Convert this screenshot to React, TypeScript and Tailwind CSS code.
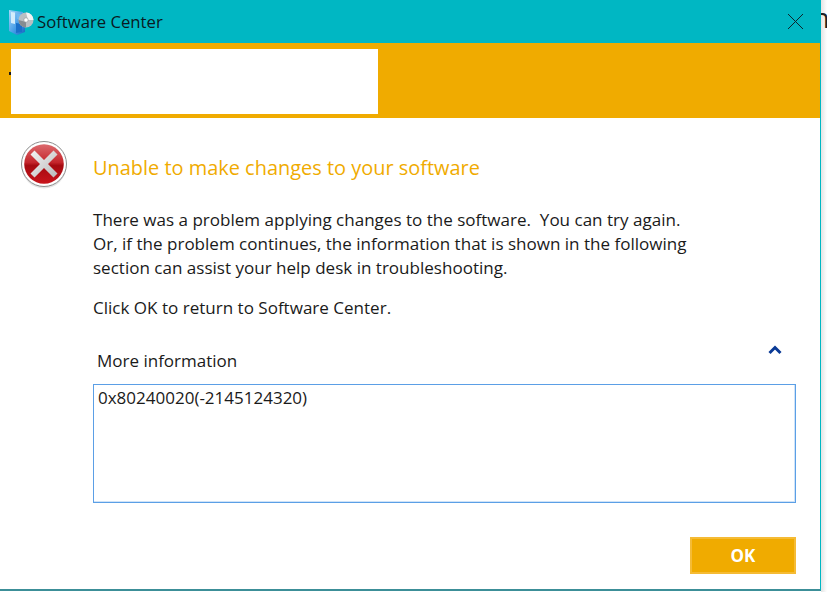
function AppIcon() {
  return (
    <svg width="26" height="26" viewBox="0 0 26 26" className="shrink-0">
      <defs>
        <linearGradient id="boxFill" x1="0" y1="0" x2="1" y2="1">
          <stop offset="0%" stopColor="#a8d8f8" />
          <stop offset="60%" stopColor="#3f98e6" />
          <stop offset="100%" stopColor="#1763bd" />
        </linearGradient>
      </defs>
      <path d="M1 1 L15 3 L15 5 L17 17 L17 23 L9 26 L1 22 Z" fill="url(#boxFill)" />
      <path d="M3 3 L7 3.5 L7 15 L3 14 Z" fill="#d4ecfb" />
      <path d="M9 4.5 L13 5 L13 10 L9 10 Z" fill="#6fb8ef" />
      <path d="M8 14 L14 15 L14 23 L8 24 Z" fill="#1a6fc9" />
      <circle cx="18" cy="11" r="7.5" fill="#b9bfc3" />
      <path d="M18 3.5 A7.5 7.5 0 0 1 25.5 11 L20 11 Z" fill="#f2f4f5" />
      <path d="M10.5 11 A7.5 7.5 0 0 0 18 18.5 L18 13 Z" fill="#858c91" />
      <circle cx="18" cy="11" r="2.2" fill="#fff" stroke="#8b9296" strokeWidth="0.6" />
    </svg>
  );
}

function ErrorIcon() {
  return (
    <svg width="48" height="50" viewBox="0 0 48 50" className="shrink-0">
      <defs>
        <linearGradient id="redFill" x1="0" y1="0" x2="0" y2="1">
          <stop offset="0%" stopColor="#dc6a6e" />
          <stop offset="46%" stopColor="#c4252b" />
          <stop offset="54%" stopColor="#a50a10" />
          <stop offset="100%" stopColor="#c9151c" />
        </linearGradient>
        <linearGradient id="crossFill" x1="0" y1="0" x2="1" y2="1">
          <stop offset="0%" stopColor="#f4f4f4" />
          <stop offset="100%" stopColor="#b9b9b9" />
        </linearGradient>
      </defs>
      <circle cx="24" cy="26" r="22.5" fill="#000" opacity="0.1" />
      <circle cx="24" cy="24" r="22.5" fill="#fff" stroke="#8d8d8d" strokeWidth="1" />
      <circle cx="24" cy="24" r="19.8" fill="url(#redFill)" />
      <path
        d="M14.5 10.5 L24 20 L33.5 10.5 L37.5 14.5 L28 24 L37.5 33.5 L33.5 37.5 L24 28 L14.5 37.5 L10.5 33.5 L20 24 L10.5 14.5 Z"
        fill="url(#crossFill)"
      />
    </svg>
  );
}

export default function App() {
  return (
    <div className="flex h-[592px] w-[827px] overflow-hidden bg-white font-['Open_Sans','Noto_Sans',sans-serif] text-[#1a1a1a]">
      <div className="flex h-[591px] w-[821px] shrink-0 flex-col border-r border-b-2 border-r-[#00b7c3] border-b-[#3c8f98] bg-white">
        {/* Title bar */}
        <div className="flex h-[43px] shrink-0 items-center justify-between bg-[#00b7c3] pl-[8px] pr-[16px]">
          <div className="flex items-center gap-[3px]">
            <AppIcon />
            <span className="text-[16.7px] text-[#0a1a22]">Software Center</span>
          </div>
          <svg width="17" height="17" viewBox="0 0 17 17">
            <path d="M1 1 L16 16 M16 1 L1 16" stroke="#10242b" strokeWidth="1" />
          </svg>
        </div>

        {/* Organisation banner */}
        <div className="flex h-[75px] shrink-0 bg-[#f0ab00] pl-[9px] pt-[6px]">
          <div className="mt-[23px] h-[3px] w-[2px] bg-[#1a1a1a]" />
          <div className="h-[65px] w-[367px] bg-white" />
        </div>

        {/* Message */}
        <div className="flex flex-col pl-[20px] pr-[24px]">
          <div className="mt-[22px] flex items-start gap-[25px]">
            <ErrorIcon />
            <h1 className="mt-[14px] text-[19.95px] leading-[28px] text-[#f0ab00]">
              Unable to make changes to your software
            </h1>
          </div>

          <div className="mt-[18px] pl-[73px] text-[17.05px] leading-[24px]">
            <p>There was a problem applying changes to the software.&nbsp; You can try again.</p>
            <p>Or, if the problem continues, the information that is shown in the following</p>
            <p>section can assist your help desk in troubleshooting.</p>
            <p className="mt-[16px]">Click OK to return to Software Center.</p>
          </div>

          <div className="mt-[29px] pl-[73px]">
            <div className="flex h-[24px] items-start justify-between pl-[4px] pr-[14px]">
              <span className="text-[17px] leading-[24px]">More information</span>
              <svg width="14" height="10" viewBox="0 0 14 10" className="-mt-[4px]">
                <path d="M1.5 8 L7 2.5 L12.5 8" fill="none" stroke="#0a3a96" strokeWidth="3" />
              </svg>
            </div>
            <div className="mt-[11px] h-[119px] w-[703px] border border-solid border-[#5b9fe6] px-[4px] py-px text-[17px] leading-[24px] shadow-[inset_-1px_-1px_0_#cfe3f8]">
              0x80240020(-2145124320)
            </div>
          </div>

          <div className="mt-[34px] flex justify-end">
            <button className="h-[37px] w-[106px] border-2 border-[#f5bb35] bg-[#f0ab00] text-[17px] font-bold text-white">
              OK
            </button>
          </div>
        </div>
      </div>

      {/* Bit of the window behind */}
      <div className="flex-1 overflow-hidden bg-gradient-to-r from-[#e4e4e4] to-white pt-[1px]">
        <span className="-ml-[8px] block text-[27px] leading-[34px] text-[#222222]">n</span>
      </div>
    </div>
  );
}
